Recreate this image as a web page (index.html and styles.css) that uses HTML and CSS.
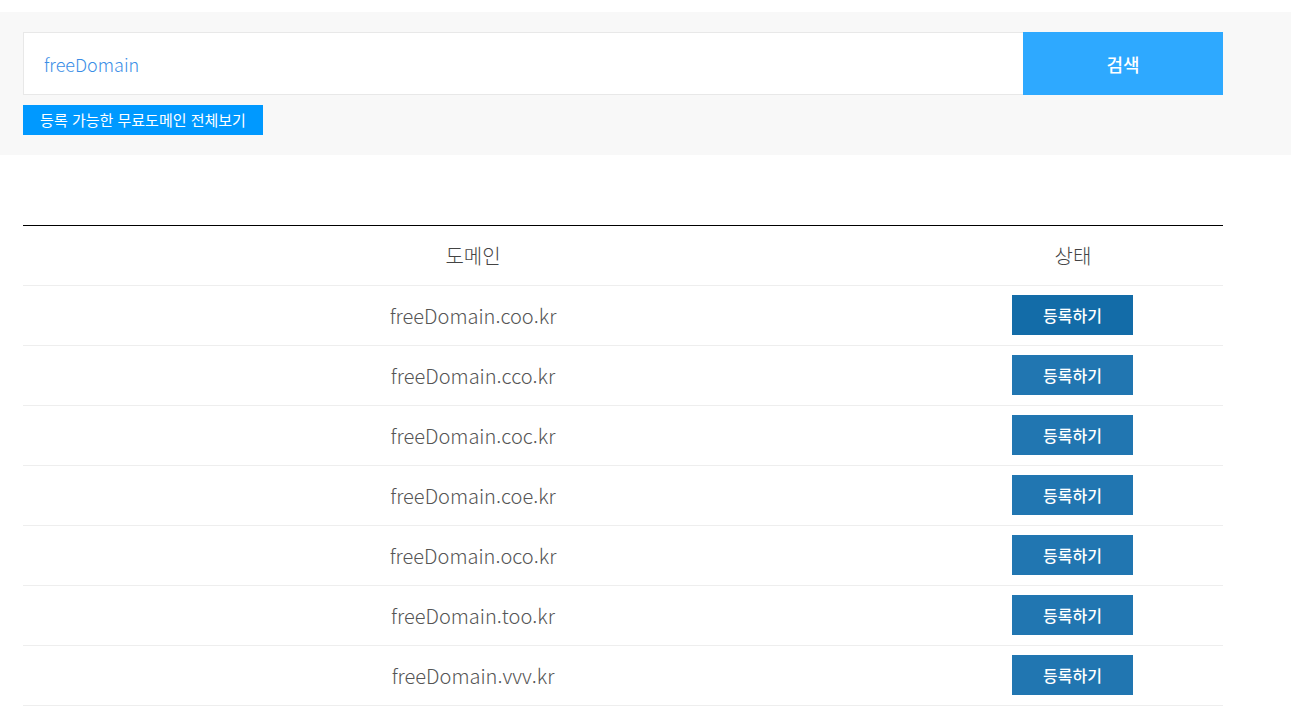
FILE: index.html
```html
<!DOCTYPE html>
<html lang="ko">
<head>
<meta charset="utf-8">
<title>무료도메인 검색</title>
<link rel="stylesheet" href="styles.css">
</head>
<body>
<section class="search-area">
  <form class="search-form">
    <div class="search-input">freeDomain</div>
    <button type="button" class="search-btn">검색</button>
  </form>
  <a class="all-link" href="#">등록 가능한 무료도메인 전체보기</a>
</section>
<table class="domain-table">
  <thead>
    <tr><th class="col-domain">도메인</th><th class="col-status">상태</th></tr>
  </thead>
  <tbody>
    <tr><td>freeDomain.coo.kr</td><td><button type="button" class="reg-btn active">등록하기</button></td></tr>
    <tr><td>freeDomain.cco.kr</td><td><button type="button" class="reg-btn">등록하기</button></td></tr>
    <tr><td>freeDomain.coc.kr</td><td><button type="button" class="reg-btn">등록하기</button></td></tr>
    <tr><td>freeDomain.coe.kr</td><td><button type="button" class="reg-btn">등록하기</button></td></tr>
    <tr><td>freeDomain.oco.kr</td><td><button type="button" class="reg-btn">등록하기</button></td></tr>
    <tr><td>freeDomain.too.kr</td><td><button type="button" class="reg-btn">등록하기</button></td></tr>
    <tr><td>freeDomain.vvv.kr</td><td><button type="button" class="reg-btn">등록하기</button></td></tr>
  </tbody>
</table>
</body>
</html>
```
FILE: styles.css
```css
* { box-sizing: border-box; }
html, body { margin: 0; padding: 0; background: #fff; }
body {
  font-family: "Noto Sans CJK KR", "Noto Sans", sans-serif;
  color: #555;
  padding-top: 12px;
}
.search-area {
  background: #f8f8f8;
  padding: 20px 23px 20px;
  height: 143px;
}
.search-form {
  display: flex;
  width: 1200px;
  height: 63px;
}
.search-input {
  flex: 1;
  background: #fff;
  border: 1px solid #e8e8e8;
  border-right: none;
  padding-left: 20px;
  display: flex;
  align-items: center;
  font-size: 18px;
  font-weight: 300;
  color: #3a8ee6;
}
.search-btn {
  width: 200px;
  border: none;
  background: #2ea9ff;
  color: #fff;
  font-family: inherit;
  font-size: 18px;
  font-weight: 500;
  padding: 0;
}
.all-link {
  display: inline-block;
  margin-top: 10px;
  width: 240px;
  height: 30px;
  line-height: 30px;
  background: #0099ff;
  color: #fff;
  font-size: 15px;
  text-align: center;
  text-decoration: none;
}
.domain-table {
  margin: 70px 0 0 23px;
  width: 1200px;
  border-collapse: collapse;
  border-top: 1px solid #000;
}
.domain-table th,
.domain-table td {
  height: 60px;
  padding: 0;
  text-align: center;
  vertical-align: middle;
  border-bottom: 1px solid #eeeeee;
  font-weight: 300;
  font-size: 20px;
  color: #555;
}
.domain-table th { color: #444; }
.col-domain { width: 900px; }
.col-status { width: 300px; }
.reg-btn {
  width: 121px;
  height: 40px;
  margin: 0 1px 2px 0;
  border: none;
  background: #2176b1;
  color: #fff;
  font-family: inherit;
  font-size: 16px;
  font-weight: 500;
  padding: 0;
  vertical-align: middle;
}
.reg-btn.active { background: #136ca8; }
```
